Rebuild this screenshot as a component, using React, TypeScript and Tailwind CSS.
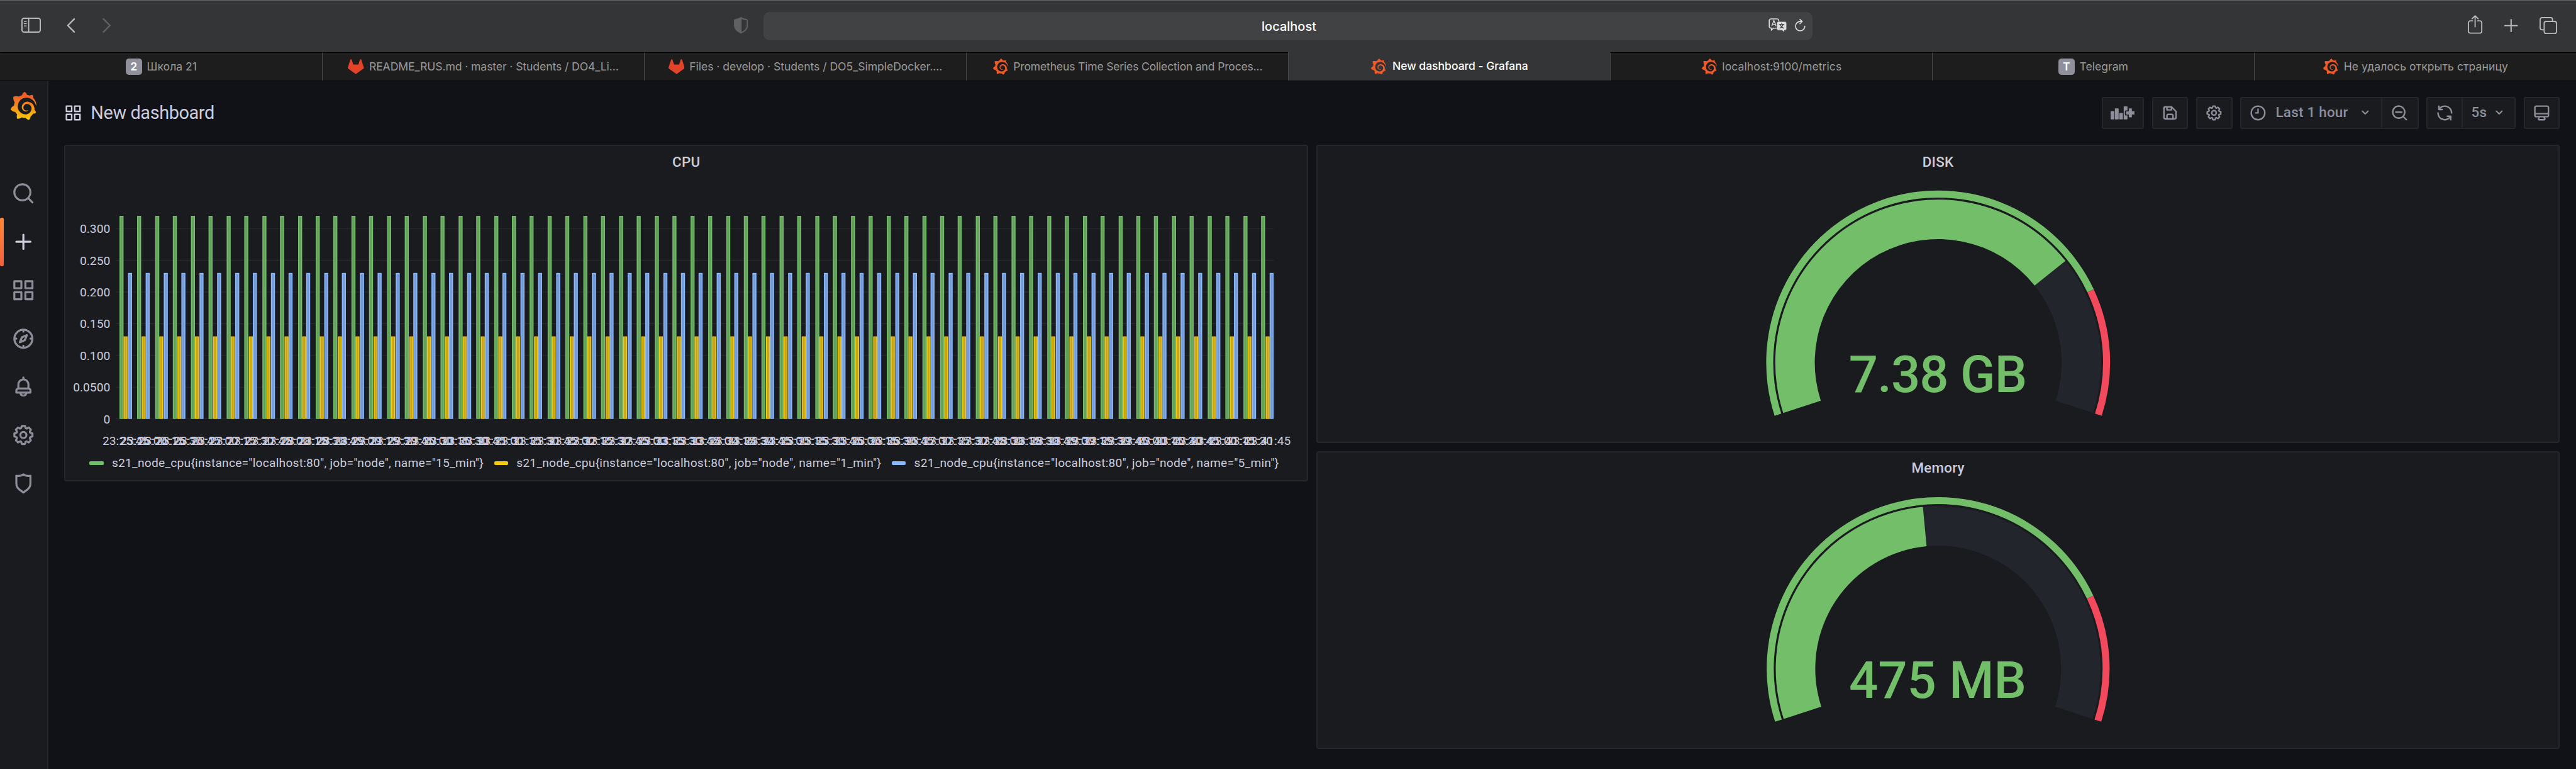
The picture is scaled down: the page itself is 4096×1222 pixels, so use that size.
import React from "react";
import { SiGrafana } from "react-icons/si";

const ICONS = {
  apps: "M10,13H3a1,1,0,0,0-1,1v7a1,1,0,0,0,1,1h7a1,1,0,0,0,1-1V14A1,1,0,0,0,10,13ZM9,20H4V15H9ZM21,2H14a1,1,0,0,0-1,1v7a1,1,0,0,0,1,1h7a1,1,0,0,0,1-1V3A1,1,0,0,0,21,2ZM20,9H15V4h5Zm1,4H14a1,1,0,0,0-1,1v7a1,1,0,0,0,1,1h7a1,1,0,0,0,1-1V14A1,1,0,0,0,21,13Zm-1,7H15V15h5ZM10,2H3A1,1,0,0,0,2,3v7a1,1,0,0,0,1,1h7a1,1,0,0,0,1-1V3A1,1,0,0,0,10,2ZM9,9H4V4H9Z",
  search: "M21.71,20.29,18,16.61A9,9,0,1,0,16.61,18l3.68,3.68a1,1,0,0,0,1.42,0A1,1,0,0,0,21.71,20.29ZM11,18a7,7,0,1,1,7-7A7,7,0,0,1,11,18Z",
  plus: "M19,11H13V5a1,1,0,0,0-2,0v6H5a1,1,0,0,0,0,2h6v6a1,1,0,0,0,2,0V13h6a1,1,0,0,0,0-2Z",
  compass: "M12,2A10,10,0,1,0,22,12,10,10,0,0,0,12,2Zm1,17.93V19a1,1,0,0,0-2,0v.93A8,8,0,0,1,4.07,13H5a1,1,0,0,0,0-2H4.07A8,8,0,0,1,11,4.07V5a1,1,0,0,0,2,0V4.07A8,8,0,0,1,19.93,11H19a1,1,0,0,0,0,2h.93A8,8,0,0,1,13,19.93ZM15.14,7.55l-5,2.12a1,1,0,0,0-.52.52l-2.12,5a1,1,0,0,0,.21,1.1,1,1,0,0,0,.7.3.93.93,0,0,0,.4-.09l5-2.12a1,1,0,0,0,.52-.52l2.12-5a1,1,0,0,0-1.31-1.31Zm-2.49,5.1-2.28,1,1-2.28,2.28-1Z",
  bell: "M18,13.18V10a6,6,0,0,0-5-5.91V3a1,1,0,0,0-2,0V4.09A6,6,0,0,0,6,10v3.18A3,3,0,0,0,4,16v2a1,1,0,0,0,1,1H8.14a4,4,0,0,0,7.72,0H19a1,1,0,0,0,1-1V16A3,3,0,0,0,18,13.18ZM8,10a4,4,0,0,1,8,0v3H8Zm4,10a2,2,0,0,1-1.72-1h3.44A2,2,0,0,1,12,20Zm6-3H6V16a1,1,0,0,1,1-1H17a1,1,0,0,1,1,1Z",
  cog: "M21.32,9.55l-1.89-.63.89-1.78A1,1,0,0,0,20.13,6L18,3.87a1,1,0,0,0-1.15-.19l-1.78.89-.63-1.89A1,1,0,0,0,13.5,2h-3a1,1,0,0,0-.95.68L8.92,4.57,7.14,3.68A1,1,0,0,0,6,3.87L3.87,6a1,1,0,0,0-.19,1.15l.89,1.78-1.89.63A1,1,0,0,0,2,10.5v3a1,1,0,0,0,.68.95l1.89.63-.89,1.78A1,1,0,0,0,3.87,18L6,20.13a1,1,0,0,0,1.15.19l1.78-.89.63,1.89a1,1,0,0,0,.95.68h3a1,1,0,0,0,.95-.68l.63-1.89,1.78.89A1,1,0,0,0,18,20.13L20.13,18a1,1,0,0,0,.19-1.15l-.89-1.78,1.89-.63A1,1,0,0,0,22,13.5v-3A1,1,0,0,0,21.32,9.55ZM20,12.78l-1.2.4A2,2,0,0,0,17.64,16l.57,1.14-1.1,1.1L16,17.64a2,2,0,0,0-2.79,1.16l-.4,1.2H11.22l-.4-1.2A2,2,0,0,0,8,17.64l-1.14.57-1.1-1.1L6.36,16A2,2,0,0,0,5.2,13.18L4,12.78V11.22l1.2-.4A2,2,0,0,0,6.36,8L5.79,6.89l1.1-1.1L8,6.36A2,2,0,0,0,10.82,5.2l.4-1.2h1.56l.4,1.2A2,2,0,0,0,16,6.36l1.14-.57,1.1,1.1L17.64,8a2,2,0,0,0,1.16,2.79l1.2.4ZM12,8a4,4,0,1,0,4,4A4,4,0,0,0,12,8Zm0,6a2,2,0,1,1,2-2A2,2,0,0,1,12,14Z",
  shield: "M19.63,3.65a1,1,0,0,0-.84-.2,8,8,0,0,1-6.22-1.27,1,1,0,0,0-1.14,0A8,8,0,0,1,5.21,3.45a1,1,0,0,0-.84.2A1,1,0,0,0,4,4.43v7.45a9,9,0,0,0,3.77,7.33l3.65,2.6a1,1,0,0,0,1.16,0l3.65-2.6A9,9,0,0,0,20,11.88V4.43A1,1,0,0,0,19.63,3.65ZM18,11.88a7,7,0,0,1-2.93,5.7L12,19.77,8.93,17.58A7,7,0,0,1,6,11.88V5.58a10,10,0,0,0,6-1.39,10,10,0,0,0,6,1.39Z",
  save: "M20.71,9.29l-6-6a1,1,0,0,0-.32-.21A1.09,1.09,0,0,0,14,3H6A3,3,0,0,0,3,6V18a3,3,0,0,0,3,3H18a3,3,0,0,0,3-3V10A1,1,0,0,0,20.71,9.29ZM9,5h4V7H9Zm6,14H9V16a1,1,0,0,1,1-1h4a1,1,0,0,1,1,1Zm4-1a1,1,0,0,1-1,1H17V16a3,3,0,0,0-3-3H10a3,3,0,0,0-3,3v3H6a1,1,0,0,1-1-1V6A1,1,0,0,1,6,5H7V8A1,1,0,0,0,8,9h6a1,1,0,0,0,1-1V6.41l4,4Z",
  clock: "M12,6a1,1,0,0,0-1,1v4H9a1,1,0,0,0,0,2h3a1,1,0,0,0,1-1V7A1,1,0,0,0,12,6Zm0-4A10,10,0,1,0,22,12,10,10,0,0,0,12,2Zm0,18a8,8,0,1,1,8-8A8,8,0,0,1,12,20Z",
  angleDown: "M17,9.17a1,1,0,0,0-1.41,0L12,12.71,8.46,9.17a1,1,0,0,0-1.41,0,1,1,0,0,0,0,1.42l4.24,4.24a1,1,0,0,0,1.42,0L17,10.59A1,1,0,0,0,17,9.17Z",
  searchMinus: "M21.71,20.29,18,16.61A9,9,0,1,0,16.61,18l3.68,3.68a1,1,0,0,0,1.42,0A1,1,0,0,0,21.71,20.29ZM11,18a7,7,0,1,1,7-7A7,7,0,0,1,11,18Zm4-8H7a1,1,0,0,0,0,2h8a1,1,0,0,0,0-2Z",
  sync: "M19.91,15.51H15.38a1,1,0,0,0,0,2h2.4A8,8,0,0,1,4,12a1,1,0,1,0-2,0,10,10,0,0,0,16.88,7.23V21a1,1,0,0,0,2,0V16.5A1,1,0,0,0,19.91,15.51ZM12,2A10,10,0,0,0,5.12,4.77V3a1,1,0,0,0-2,0V7.5a1,1,0,0,0,1,1h4.5a1,1,0,0,0,0-2H6.22A8,8,0,0,1,20,12a1,1,0,0,0,2,0A10,10,0,0,0,12,2Z",
  monitor: "M19,2H5A3,3,0,0,0,2,5V15a3,3,0,0,0,3,3H7.64l-.58,1a2,2,0,0,0,0,2,2,2,0,0,0,1.75,1h6.46A2,2,0,0,0,17,21a2,2,0,0,0,0-2l-.59-1H19a3,3,0,0,0,3-3V5A3,3,0,0,0,19,2ZM8.77,20,10,18H14l1.2,2ZM20,15a1,1,0,0,1-1,1H5a1,1,0,0,1-1-1V14H20Zm0-3H4V5A1,1,0,0,1,5,4H19a1,1,0,0,1,1,1Z",
};

function Icon({ name, className }: { name: keyof typeof ICONS; className: string }) {
  return (
    <svg viewBox="0 0 24 24" fill="currentColor" className={"shrink-0 " + className}>
      <path d={ICONS[name]} />
    </svg>
  );
}

/* ---------- Browser chrome ---------- */

function BrowserToolbar() {
  return (
    <div className="flex h-[83px] items-center border-t-2 border-[#58595b] bg-[#343537] pb-[2px] text-[#b9babb]">
      <div className="flex w-[1214px] items-center pb-[2px]">
        <svg viewBox="0 0 39 30" className="ml-[33.6px] h-6 w-[31.2px]" fill="none" stroke="currentColor" strokeWidth="2.4">
          <rect x="1.2" y="1.2" width="36.4" height="27.6" rx="4" />
          <path d="M14.5 1.5v27" />
          <path d="M5 7.5h5.5M5 12h5.5M5 16.5h5.5" strokeWidth="1.8" />
        </svg>
        <svg viewBox="0 0 16 28" className="ml-[41px] h-[23px] w-[13.6px]" fill="none" stroke="currentColor" strokeWidth="3" strokeLinecap="round" strokeLinejoin="round">
          <path d="M14.5 1.5 2 14l12.500 12.500" />
        </svg>
        <svg viewBox="0 0 16 28" className="ml-[43.400px] h-[23px] w-[13.6px] text-[#606163]" fill="none" stroke="currentColor" strokeWidth="3" strokeLinecap="round" strokeLinejoin="round">
          <path d="M1.500 1.500 14 14 1.500 26.500" />
        </svg>
        <svg viewBox="0 0 28 33" className="ml-auto mr-[25px] h-[26.400px] w-[22.4px] text-[#606163]" fill="none" stroke="currentColor" strokeWidth="2.400">
          <path d="M14 1.400C17.500 4 22 4.800 25.400 5.500c1 .3 1.200.8 1.200 1.800v10c0 6-5.600 11.200-12.600 14.300C7 28.500 1.400 23.300 1.400 17.300v-10c0-1 .2-1.500 1.200-1.800C6 4.800 10.500 4 14 1.400Z" />
          <path d="M14 2v29C7 28 2 23 2 17V6c4-.7 9-2 12-4Z" fill="currentColor" />
        </svg>
      </div>
      <div className="flex h-[45px] w-[1667.500px] items-center rounded-[9.600px] bg-[#414244] pr-[11px]">
        <div className="flex-1 pl-[73px] text-center font-[Inter] text-[20px] font-medium text-white">localhost</div>
        <svg viewBox="0 0 37 28" className="mb-[3px] h-[22.400px] w-[29.6px] text-[#dedede]" fill="none">
          <path d="M5 1.200h12a3.500 3.500 0 0 1 3.500 3.500v11.500a3.500 3.500 0 0 1-3.500 3.500h-7l-4.200 3.800v-3.800H5a3.500 3.500 0 0 1-3.500-3.500V4.700A3.500 3.500 0 0 1 5 1.200Z" stroke="currentColor" strokeWidth="2" />
          <path d="m6.500 15.500 4.300-11 4.300 11M8 12h5.600" stroke="currentColor" strokeWidth="1.800" />
          <path d="M20 6.500h12.500A3.500 3.500 0 0 1 36 10v10.500a3.500 3.500 0 0 1-3.500 3.500h-1v4l-4.500-4h-7a3.500 3.500 0 0 1-3.500-3.500V10A3.500 3.500 0 0 1 20 6.500Z" fill="currentColor" stroke="#414244" strokeWidth="0.800" />
          <path d="M21 12h10.500M26.200 9.500V12M29 12.500c-1 3.500-3.500 6-7 7.500M23.500 12.500c1 3.500 3.500 6 7 7.500" stroke="#414244" strokeWidth="1.700" />
        </svg>
        <svg viewBox="0 0 21 25" className="mb-[3px] ml-[12px] h-5 w-[16.800px] text-[#dedede]" fill="none" stroke="currentColor" strokeWidth="2" strokeLinecap="round" strokeLinejoin="round">
          <path d="M19.800 14.500a9.300 9.300 0 1 1-9.300-9.300h3" />
          <path d="m10 1 4.500 4.200L10 9.500" />
        </svg>
      </div>
      <div className="flex flex-1 items-center justify-end pr-[30px] pb-[2px]">
        <svg viewBox="0 0 29 37" className="mb-[3px] h-[29.600px] w-[23.200px]" fill="none" stroke="currentColor" strokeWidth="2.300" strokeLinecap="round" strokeLinejoin="round">
          <path d="M9.500 11.500H5A3.700 3.700 0 0 0 1.300 15.200v17A3.700 3.700 0 0 0 5 35.800h19a3.700 3.700 0 0 0 3.700-3.600v-17a3.700 3.700 0 0 0-3.700-3.700h-4.500" />
          <path d="M14.500 23V1.500M8.500 7.200l6-5.900 6 5.900" />
        </svg>
        <svg viewBox="0 0 27 27" className="ml-[34.400px] h-[21.600px] w-[21.600px]" fill="none" stroke="currentColor" strokeWidth="2.600" strokeLinecap="round">
          <path d="M13.500 1.300v24.400M1.300 13.500h24.400" />
        </svg>
        <svg viewBox="0 0 35 34" className="ml-[34.400px] h-[27.200px] w-7" fill="none" stroke="currentColor" strokeWidth="2.300">
          <rect x="9.200" y="8.700" width="24.600" height="24.200" rx="4" />
          <path d="M9 25.500H5a3.800 3.800 0 0 1-3.800-3.800V5A3.800 3.800 0 0 1 5 1.200h17A3.800 3.800 0 0 1 25.800 5v3.500" />
        </svg>
      </div>
    </div>
  );
}

function Favicon({ kind }: { kind: string }) {
  if (kind === "grafana") return <SiGrafana className="h-[25.600px] w-[25.600px] shrink-0 text-[#f05a28]" />;
  if (kind === "gitlab")
    return (
      <svg viewBox="0 0 24 24" className="h-[25.600px] w-[25.600px] shrink-0 text-[#e24329]" fill="currentColor">
        <path d="M4.845.904c-.435 0-.82.28-.955.692C2.639 5.449 1.246 9.728.07 13.335a1.437 1.437 0 00.522 1.607l11.071 8.045c.2.145.472.144.67-.004l11.073-8.04a1.436 1.436 0 00.522-1.61c-1.285-3.942-2.683-8.256-3.817-11.746a1.004 1.004 0 00-.957-.684.987.987 0 00-.949.69l-2.405 7.408H8.203l-2.41-7.408a.987.987 0 00-.942-.69h-.006z" />
      </svg>
    );
  return (
    <div className="flex h-[25.600px] w-[25.600px] shrink-0 items-center justify-center rounded-[5px] bg-[#8f909c] font-[Inter] text-[17.600px] font-semibold text-white">
      {kind}
    </div>
  );
}

const TABS = [
  { icon: "2", title: "Школа 21" },
  { icon: "gitlab", title: "README_RUS.md · master · Students / DO4_Li...", tracking: "tracking-[-0.100px]" },
  { icon: "gitlab", title: "Files · develop · Students / DO5_SimpleDocker....", tracking: "tracking-[-0.040px]" },
  { icon: "grafana", title: "Prometheus Time Series Collection and Proces...", tracking: "tracking-[-0.200px]" },
  { icon: "grafana", title: "New dashboard - Grafana", tracking: "ml-px tracking-[-0.050px]", active: true },
  { icon: "grafana", title: "localhost:9100/metrics", tracking: "tracking-[0.050px]" },
  { icon: "T", title: "Telegram" },
  { icon: "grafana", title: "Не удалось открыть страницу", tracking: "tracking-[0.050px]" },
];

function TabBar() {
  return (
    <div className="grid h-[46px] grid-cols-8 border-b border-black">
      {TABS.map((t, i) => (
        <div
          key={i}
          className={
            "flex items-center justify-center gap-2 border-l font-[Inter] text-[17.600px] whitespace-nowrap " +
            (t.active
              ? "border-l-[#48494a] bg-[#343537] font-medium text-white"
              : "border-t border-t-black bg-[#1d1d1d] text-[#9a9a9a] " + (i === 0 ? "border-l-transparent" : "border-l-[#48494a]"))
          }
        >
          <Favicon kind={t.icon} />
          <span className={t.tracking}>{t.title}</span>
        </div>
      ))}
    </div>
  );
}

/* ---------- Grafana ---------- */

function SideItem({ name, active }: { name: keyof typeof ICONS; active?: boolean }) {
  return (
    <div className="relative flex h-[76.800px] w-full items-center justify-center">
      {active && <div className="absolute left-0 top-0 h-full w-[6.400px] rounded-[2px] bg-gradient-to-b from-[#ff8833] to-[#f55f3e]" />}
      <Icon name={name} className={"h-[38.400px] w-[38.400px] " + (active ? "text-[#ccccdc]" : "text-[#8e8e9a]")} />
    </div>
  );
}

function SideMenu() {
  return (
    <nav className="flex w-[76.800px] shrink-0 flex-col items-center border-r-2 border-[#25262b] bg-[#1a1b1f]">
      <svg className="h-0 w-0">
        <defs>
          <linearGradient id="logoFill" x1="0" y1="0" x2="0" y2="1">
            <stop offset="0.1" stopColor="#f05a28" />
            <stop offset="1" stopColor="#fbca0a" />
          </linearGradient>
        </defs>
      </svg>
      <SiGrafana className="mt-[17px] mb-[79px] h-[44.500px] w-[44.500px] shrink-0" fill="url(#logoFill)" />
      <div className="-mt-[0.500px] flex w-full flex-col">
        <SideItem name="search" />
        <SideItem name="plus" active />
        <SideItem name="apps" />
        <SideItem name="compass" />
        <SideItem name="bell" />
        <SideItem name="cog" />
        <SideItem name="shield" />
      </div>
    </nav>
  );
}

const BTN = "flex h-[51.200px] items-center rounded-[3px] border-2 border-[#25262b] bg-[#1a1b1f] ";

function Header() {
  return (
    <header className="flex h-[101.400px] shrink-0 items-center pb-px text-[#8e8e9a]">
      <Icon name="apps" className="-ml-[0.400px] h-[28.800px] w-[28.800px] text-[#ccccdc]" />
      <h1 className="ml-[13.500px] text-[28.800px] font-normal tracking-[-0.360px] text-[#ccccdc]">New dashboard</h1>
      <div className="ml-auto flex gap-[12.800px] text-[22.400px] font-medium">
        <div className={BTN + "w-[67.200px] justify-center"}>
          <svg viewBox="0 0 48 26" className="h-[20.800px] w-[38.400px]" fill="currentColor">
            <rect x="0" y="9.300" width="7.200" height="16.700" rx="1" />
            <rect x="8.500" y="4" width="7.500" height="22" rx="1" />
            <rect x="17.200" y="13" width="7.200" height="13" rx="1" />
            <path d="M27 0h5.500a1 1 0 0 1 1 1v7H30a2 2 0 0 0-1.500 2v6a2 2 0 0 0 1.500 2h3.500v7a1 1 0 0 1-1 1H27a1 1 0 0 1-1-1V1a1 1 0 0 1 1-1Z" />
            <path d="M37.300 4.200h4a1 1 0 0 1 1 1v4.900H47a1 1 0 0 1 1 1v4a1 1 0 0 1-1 1h-4.700v4.700a1 1 0 0 1-1 1h-4a1 1 0 0 1-1-1v-4.700h-4.600a1 1 0 0 1-1-1v-4a1 1 0 0 1 1-1h4.600V5.200a1 1 0 0 1 1-1Z" />
          </svg>
        </div>
        <div className={BTN + "w-[57.600px] justify-center"}>
          <Icon name="save" className="h-[28.800px] w-[28.800px]" />
        </div>
        <div className={BTN + "w-[57.600px] justify-center"}>
          <Icon name="cog" className="h-[28.800px] w-[28.800px]" />
        </div>
        <div className={BTN + "w-[283.200px]"}>
          <Icon name="clock" className="ml-[11.800px] h-[28.800px] w-[28.800px]" />
          <span className="ml-[13.500px] w-[129px] tracking-[0.240px] whitespace-nowrap">Last 1 hour</span>
          <Icon name="angleDown" className="h-[25.600px] w-[25.600px]" />
          <div className="ml-auto flex h-full w-[57.600px] items-center justify-center border-l-2 border-[#25262b]">
            <Icon name="searchMinus" className="h-[28.800px] w-[28.800px]" />
          </div>
        </div>
        <div className={BTN + "w-[141.600px]"}>
          <div className="flex h-full w-[56px] items-center justify-center border-r-2 border-[#25262b]">
            <Icon name="sync" className="h-[28.800px] w-[28.800px]" />
          </div>
          <span className="ml-[13.200px] w-[28.400px] tracking-[0.240px]">5s</span>
          <Icon name="angleDown" className="ml-[2.500px] h-[25.600px] w-[25.600px]" />
        </div>
        <div className={BTN + "w-[57.600px] justify-center"}>
          <Icon name="monitor" className="h-[28.800px] w-[28.800px]" />
        </div>
      </div>
    </header>
  );
}

function Panel({ title, className, children }: { title: string; className: string; children: React.ReactNode }) {
  return (
    <section className={"flex flex-col overflow-hidden rounded-[4px] border-2 border-[#25262b] bg-[#1a1b1f] " + className}>
      <h2 className="flex h-[50px] shrink-0 items-center justify-center text-[22.400px] font-medium tracking-[0.240px] text-[#ccccdc]">{title}</h2>
      {children}
    </section>
  );
}

const SERIES = [
  { label: 's21_node_cpu{instance="localhost:80", job="node", name="15_min"}', value: 0.32, dx: 0, stroke: "#73bf69", fill: "#63a05b", swatch: "bg-[#73bf69]" },
  { label: 's21_node_cpu{instance="localhost:80", job="node", name="1_min"}', value: 0.13, dx: 8.4, stroke: "#f2cc0c", fill: "#c8a41e", swatch: "bg-[#f2cc0c]" },
  { label: 's21_node_cpu{instance="localhost:80", job="node", name="5_min"}', value: 0.23, dx: 16.9, stroke: "#8ab8ff", fill: "#759bd6", swatch: "bg-[#8ab8ff]" },
];
const Y_TICKS: [number, string][] = [
  [0, "0"],
  [0.05, "0.0500"],
  [0.1, "0.100"],
  [0.15, "0.150"],
  [0.2, "0.200"],
  [0.25, "0.250"],
  [0.3, "0.300"],
];
const Y0 = 832.5;
const yOf = (v: number) => Y0 - v * 1260;
const GROUPS = Array.from({ length: 65 }, (_, i) => {
  const s = 25 * 60 + 45 + i * 15;
  const pad = (n: number) => String(n).padStart(2, "0");
  return { x: 238 + i * 35.456, time: "23:" + pad(Math.floor(s / 60)) + ":" + pad(s % 60) };
});

function CpuChart() {
  return (
    <svg viewBox="130.5 353 2467 547" className="h-[437.600px] w-[1973.600px] shrink-0 font-[Roboto]" fontSize="24">
      {Y_TICKS.map(([v, t]) => (
        <g key={t}>
          <path d={`M230.500 ${yOf(v)}H2532`} stroke="#2a2b30" strokeWidth="1.400" />
          <text x="219.500" y={yOf(v) + 8.8} textAnchor="end" fill="#ccccdc">{t}</text>
        </g>
      ))}
      {SERIES.map((s) =>
        GROUPS.map((g) => (
          <rect
            key={s.value + g.time}
            x={Math.round(g.x + s.dx) + 1}
            y={yOf(s.value) + 1}
            width="6"
            height={Y0 - yOf(s.value) - 2}
            fill={s.fill}
            stroke={s.stroke}
            strokeWidth="2"
          />
        ))
      )}
      {GROUPS.map((g) => (
        <text key={g.time} x={g.x + 12.5} y="884.400" textAnchor="middle" fill="#ccccdc">{g.time}</text>
      ))}
    </svg>
  );
}

function Legend() {
  return (
    <div className="flex h-8 shrink-0 items-center gap-[16.800px] pl-[38px] text-[19.200px] tracking-[0.225px] text-[#ccccdc]">
      {SERIES.map((s) => (
        <div key={s.label} className="flex items-center gap-[13.200px] whitespace-nowrap">
          <div className={"h-[6.400px] w-[22.400px] rounded-[2px] " + s.swatch} />
          <span>{s.label}</span>
        </div>
      ))}
    </div>
  );
}

const CX = 3852;

/* Annular sector; t0 and t1 are fractions of the 216° sweep. */
function sector(cy: number, r0: number, r1: number, t0: number, t1: number) {
  const pt = (r: number, t: number) => {
    const a = ((198 - t * 216) * Math.PI) / 180;
    return `${(CX + r * Math.cos(a)).toFixed(2)} ${(cy - r * Math.sin(a)).toFixed(2)}`;
  };
  const large = (t1 - t0) * 216 > 180 ? 1 : 0;
  return `M${pt(r1, t0)}A${r1} ${r1} 0 ${large} 1 ${pt(r1, t1)}L${pt(r0, t1)}A${r0} ${r0} 0 ${large} 0 ${pt(r0, t0)}Z`;
}

type GaugeProps = { value: number; text: string; cy: number; r: number; baseline: number; spacing: number };

function Gauge({ value, text, cy, r, baseline, spacing }: GaugeProps) {
  return (
    <svg viewBox="2618.500 353 2467 524" className="h-[419.200px] w-[1973.600px] shrink-0 font-[Roboto]">
      <path d={sector(cy, r - 96.5, r - 18, 0, 1)} fill="#22252c" />
      <path d={sector(cy, r - 96.5, r - 18, 0, value)} fill="#73bf69" />
      <path d={sector(cy, r - 14, r, 0, 0.8)} fill="#73bf69" />
      <path d={sector(cy, r - 14, r, 0.8, 1)} fill="#f2495c" />
      <text x="3851" y={baseline} textAnchor="middle" fontSize="102" fontWeight="500" letterSpacing={spacing} fill="#73bf69">{text}</text>
    </svg>
  );
}

export default function App() {
  return (
    <div className="flex h-[1222px] w-[4096px] flex-col overflow-hidden bg-[#111217] font-[Roboto]">
      <BrowserToolbar />
      <TabBar />
      <div className="flex min-h-0 flex-1">
        <SideMenu />
        <main className="flex flex-1 flex-col px-[25.600px]">
          <Header />
          <div className="flex items-start gap-[12.800px]">
            <Panel title="CPU" className="h-[534.400px] w-[1977.600px]">
              <CpuChart />
              <Legend />
            </Panel>
            <div className="flex flex-col gap-[12.800px]">
              <Panel title="DISK" className="h-[473.600px] w-[1977.600px]">
                <Gauge value={0.738} text="7.38 GB" cy={720.7} r={341.8} baseline={779.4} spacing={-1.2} />
              </Panel>
              <Panel title="Memory" className="h-[473.600px] w-[1977.600px]">
                <Gauge value={0.475} text="475 MB" cy={720} r={340.8} baseline={778.6} spacing={0} />
              </Panel>
            </div>
          </div>
        </main>
      </div>
    </div>
  );
}
